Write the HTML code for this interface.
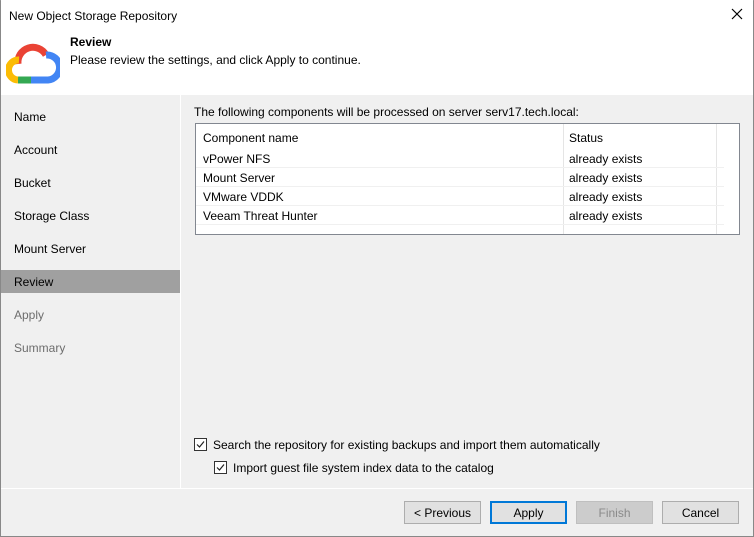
<!DOCTYPE html>
<html><head><meta charset="utf-8"><style>
*{margin:0;padding:0;box-sizing:border-box}
body{width:754px;height:537px;overflow:hidden;font-family:"Liberation Sans",sans-serif;font-size:12px;color:#000;background:#f0f0f0;position:relative}
.win{position:absolute;left:0;top:0;width:754px;height:537px;border:1px solid #888;border-top:1px solid #999}
.abs{position:absolute}
.title{left:1px;top:0;width:752px;height:95px;background:#fff}
.nav div{position:absolute;left:1px;width:179px;height:23px;padding-left:13px;line-height:25px}
.btn{position:absolute;top:501px;width:77px;height:23px;border:1px solid #adadad;background:#e1e1e1;text-align:center;line-height:23px}
</style></head><body>
<div class="win"></div>
<div class="abs title"></div>
<div class="abs" style="left:9px;top:9px;font-size:12px">New Object Storage Repository</div>
<svg class="abs" style="left:731px;top:8px" width="12" height="12"><path d="M1 1L11 11M11 1L1 11" stroke="#000" stroke-width="1.2"/></svg>
<svg class="abs" style="left:6px;top:42px" width="54" height="42" viewBox="0 0 54 42">
<path d="M12 22 A15 15 0 0 1 40 13" stroke="#ea4335" stroke-width="7" fill="none"/>
<path d="M40 13 A11.5 11.5 0 0 1 42 38 L24 38" stroke="#4285f4" stroke-width="7" fill="none"/>
<path d="M25 38 L12 38" stroke="#34a853" stroke-width="7" fill="none"/>
<path d="M12 38 A10 10 0 0 1 13 18" stroke="#fbbc05" stroke-width="7" fill="none"/>
</svg>
<div class="abs" style="left:70px;top:35px;font-weight:bold">Review</div>
<div class="abs" style="left:70px;top:53px">Please review the settings, and click Apply to continue.</div>
<div class="abs" style="left:180px;top:95px;width:1px;height:393px;background:#fff"></div>
<div class="nav">
<div style="top:105px">Name</div>
<div style="top:138px">Account</div>
<div style="top:171px">Bucket</div>
<div style="top:204px">Storage Class</div>
<div style="top:237px">Mount Server</div>
<div style="top:270px;background:#a0a0a0">Review</div>
<div style="top:303px;color:#6d6d6d">Apply</div>
<div style="top:336px;color:#6d6d6d">Summary</div>
</div>
<div class="abs" style="left:194px;top:105px">The following components will be processed on server serv17.tech.local:</div>
<div class="abs" style="left:195px;top:123px;width:545px;height:112px;border:1px solid #828790;background:#fff">
<div class="abs" style="left:367px;top:0;width:1px;height:110px;background:#e5e5e5"></div>
<div class="abs" style="left:520px;top:0;width:1px;height:110px;background:#e5e5e5"></div>
<div class="abs" style="left:7px;top:7px">Component name</div>
<div class="abs" style="left:373px;top:7px">Status</div>
<div class="abs" style="left:0;top:43px;width:528px;height:1px;background:#f0f0f0"></div>
<div class="abs" style="left:0;top:62px;width:528px;height:1px;background:#f0f0f0"></div>
<div class="abs" style="left:0;top:81px;width:528px;height:1px;background:#f0f0f0"></div>
<div class="abs" style="left:0;top:100px;width:528px;height:1px;background:#f0f0f0"></div>
<div class="abs" style="left:7px;top:28px">vPower NFS</div><div class="abs" style="left:373px;top:28px">already exists</div>
<div class="abs" style="left:7px;top:47px">Mount Server</div><div class="abs" style="left:373px;top:47px">already exists</div>
<div class="abs" style="left:7px;top:66px">VMware VDDK</div><div class="abs" style="left:373px;top:66px">already exists</div>
<div class="abs" style="left:7px;top:85px">Veeam Threat Hunter</div><div class="abs" style="left:373px;top:85px">already exists</div>
</div>
<svg class="abs" style="left:194px;top:438px" width="13" height="13"><rect x=".5" y=".5" width="12" height="12" fill="#fff" stroke="#333"/><path d="M3 6.5L5.5 9L10 3.5" stroke="#222" stroke-width="1.2" fill="none"/></svg>
<div class="abs" style="left:213px;top:438px">Search the repository for existing backups and import them automatically</div>
<svg class="abs" style="left:214px;top:461px" width="13" height="13"><rect x=".5" y=".5" width="12" height="12" fill="#fff" stroke="#333"/><path d="M3 6.5L5.5 9L10 3.5" stroke="#222" stroke-width="1.2" fill="none"/></svg>
<div class="abs" style="left:233px;top:461px">Import guest file system index data to the catalog</div>
<div class="abs" style="left:1px;top:488px;width:752px;height:1px;background:#fff"></div>
<div class="btn" style="left:404px">&lt; Previous</div>
<div class="btn" style="left:490px;border:2px solid #0078d7;line-height:21px">Apply</div>
<div class="btn" style="left:576px;background:#cccccc;border-color:#bfbfbf;color:#8a8a8a">Finish</div>
<div class="btn" style="left:662px">Cancel</div>
</body></html>
